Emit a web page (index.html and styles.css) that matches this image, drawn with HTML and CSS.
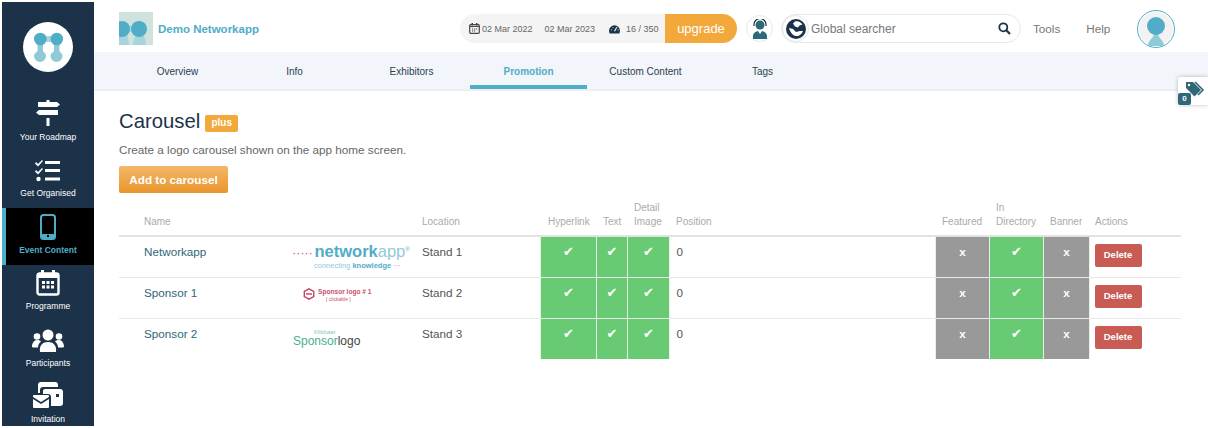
FILE: index.html
```html
<!doctype html>
<html lang="en">
  <head>
    <meta charset="UTF-8" />
    <title>Carousel</title>
    <link rel="stylesheet" href="styles.css">
  </head>
  <body>
    <div class="app">
      <nav class="sidebar">
        <div class="brand">
          <svg width="50" height="50" viewBox="0 0 50 50">
            <circle cx="25" cy="25" r="25" fill="#fff" />
            <path d="M17 14h17v6H17z" fill="#a9d6df" />
            <path d="M14.500 20h5.500v9c0 1 3 2 3 5a6 6 0 0 1-12 0c0-3 3.500-4 3.500-5zM31 20h5.500v9c0 1 3 2 3 5a6 6 0 0 1-12 0c0-3 3.500-4 3.500-5z" fill="#8fcbd6" />
            <circle cx="17.300" cy="17" r="6.300" fill="#4fadc7" />
            <circle cx="33.800" cy="17" r="6.300" fill="#4fadc7" />
          </svg>
        </div>
        <a class="nav-item">
          <svg width="26" height="28" viewBox="0 0 26 28" fill="#fff">
            <path d="M3 3h19l3 2.500L22 8H3zM1 13.500L4 11h19v5H4zM11.500 1h3v2h-3zM11.500 19h3v8h-3z" />
          </svg>
          <span>Your Roadmap</span>
        </a>
        <a class="nav-item">
          <svg width="26" height="24" viewBox="0 0 26 24" fill="#fff">
            <path d="M1 3l2 2 4-4 1 1-5 5.500L0 4.500zM1 11l2 2 4-4 1 1-5 5.500L0 12.500z" />
            <circle cx="3.500" cy="20" r="2.200" />
            <path d="M10 2h15v3H10zM10 10h15v3H10zM10 18.500h15v3H10z" />
          </svg>
          <span>Get Organised</span>
        </a>
        <a class="nav-item active">
          <svg width="16" height="26" viewBox="0 0 16 26">
            <rect x="1" y="1" width="14" height="24" rx="2.500" fill="none" stroke="#4fadc7" stroke-width="2" />
            <path d="M1 20h14v3a2 2 0 0 1-2 2H3a2 2 0 0 1-2-2z" fill="#4fadc7" />
            <circle cx="8" cy="22" r="1.200" fill="#000" />
          </svg>
          <span>Event Content</span>
        </a>
        <a class="nav-item">
          <svg width="24" height="26" viewBox="0 0 24 26">
            <rect x="1.500" y="3.500" width="21" height="21" rx="2" fill="none" stroke="#fff" stroke-width="2.400" />
            <path d="M1 3h22v5H1zM5 0h3v4H5zM16 0h3v4h-3z" fill="#fff" />
            <path d="M6 11h3v3H6zM10.500 11h3v3h-3zM15 11h3v3h-3zM6 15.500h3v3H6zM10.500 15.500h3v3h-3zM15 15.500h3v3h-3z" fill="#fff" />
          </svg>
          <span>Programme</span>
        </a>
        <a class="nav-item">
          <svg width="32" height="24" viewBox="0 0 32 24" fill="#fff">
            <circle cx="16" cy="6" r="5.500" />
            <circle cx="5" cy="7.500" r="3.300" />
            <circle cx="27" cy="7.500" r="3.300" />
            <path d="M8 23c-1-7 3-10 8-10s9 3 8 10zM0 18c0-4 2-7 5-7 2 0 3 .5 4 1.500-2 1.500-3 3.500-3 6H1zM32 18c0-4-2-7-5-7-2 0-3 .5-4 1.500 2 1.500 3 3.500 3 6h5z" />
          </svg>
          <span>Participants</span>
        </a>
        <a class="nav-item">
          <svg width="30" height="27" viewBox="0 0 30 27" fill="#fff">
            <path d="M5 3a3 3 0 0 1 3-3h14a3 3 0 0 1 3 3v2H10a3 3 0 0 0-3 3v3H5z" />
            <path d="M12 7h15a3 3 0 0 1 3 3v11a3 3 0 0 1-3 3h-9v-9a3 3 0 0 0-3-3h-5v-3a2 2 0 0 1 2-2z" />
            <path d="M0 15l8 5 8-5v-1a1 1 0 0 0-1-1H1a1 1 0 0 0-1 1zM0 17v8a1 1 0 0 0 1 1h14a1 1 0 0 0 1-1v-8l-8 5z" />
            <rect x="23" y="12" width="3" height="3" fill="#1c3249" />
          </svg>
          <span>Invitation</span>
        </a>
      </nav>

      <div class="page">
        <header class="topbar">
          <div class="event">
            <svg class="event-thumb" width="34" height="33" viewBox="0 0 34 33">
              <rect width="34" height="33" fill="#cfe3dc" />
              <path d="M10 14h8v6h-8z" fill="#a9d6df" />
              <path d="M0 33V20h6c2 3 4 6 4 13zM14 33c0-7 3-9 4-13h5c1 4 4 6 4 13z" fill="#a8d5dc" />
              <circle cx="3" cy="17" r="8" fill="#4fadc7" />
              <circle cx="20" cy="17" r="8" fill="#4fadc7" />
            </svg>
            <span class="event-name">Demo Networkapp</span>
          </div>
          <div class="status-pill">
            <div class="status-info">
              <svg width="11" height="11" viewBox="0 0 11 11">
                <rect x=".7" y="1.700" width="9.600" height="8.600" rx="1" fill="none" stroke="#444" stroke-width="1.200" />
                <path d="M2.500 0h1.500v2.500H2.500zM7 0h1.500v2.500H7zM1 3h9v1H1zM3 5.500h1.200v1H3zM5 5.500h1.200v1H5zM7 5.500h1.200v1H7zM3 7.500h1.200v1H3zM5 7.500h1.200v1H5z" fill="#444" />
              </svg>
              <span class="date-from">02 Mar 2022</span>
              <span class="date-to">02 Mar 2023</span>
              <svg width="11" height="10" viewBox="0 0 12 10">
                <path d="M0 7a6 6 0 0 1 12 0c0 1-.3 2-.8 3H.8C.3 9 0 8 0 7z" fill="#1c3249" />
                <path d="M6 7.500L8.500 3" stroke="#f4f4f4" stroke-width="1.200" />
                <path d="M2 6h1M9.500 6h1M4 3.500h.8" stroke="#f4f4f4" />
              </svg>
              <span>16 / 350</span>
            </div>
            <a class="upgrade">upgrade</a>
          </div>
          <div class="round-btn">
            <svg width="16" height="20" viewBox="0 0 16 20">
              <circle cx="8" cy="6" r="4.500" fill="#2f6878" />
              <path d="M2 7V5.500a6 6 0 0 1 12 0V7" fill="none" stroke="#1c3249" stroke-width="1.200" />
              <path d="M1 20v-3c0-3 3-4.500 5-5l2 3 2-3c2 .5 5 2 5 5v3z" fill="#2f6878" />
            </svg>
          </div>
          <div class="search">
            <div class="globe">
              <svg width="20" height="20" viewBox="0 0 20 20">
                <circle cx="10" cy="10" r="10" fill="#1c3249" />
                <path d="M9 2.500c3-1 6 .5 7.500 3l-3 1-1.500 2-3-1-2-3zM3 9l4 1 3 3 4-1 3 0c-1 3-4 5.500-7 5-3 0-6-4-7-8z" fill="#fff" />
              </svg>
            </div>
            <span class="search-text">Global searcher</span>
            <svg width="13" height="13" viewBox="0 0 13 13">
              <circle cx="5.300" cy="5.300" r="4" fill="none" stroke="#1c3249" stroke-width="1.800" />
              <path d="M8.300 8.300l3.700 3.700" stroke="#1c3249" stroke-width="2.200" />
            </svg>
          </div>
          <a class="top-link tools">Tools</a>
          <a class="top-link help">Help</a>
          <div class="avatar">
            <svg width="34" height="34" viewBox="0 0 34 34">
              <circle cx="17" cy="17" r="17" fill="#f2f2f2" />
              <path d="M9 34c0-6 5-7 6-12h4c1 5 6 6 6 12z" fill="#8fcbd6" />
              <circle cx="17" cy="14" r="9" fill="#4fadc7" />
            </svg>
          </div>
        </header>

        <div class="tabs">
          <a class="tab">Overview</a>
          <a class="tab">Info</a>
          <a class="tab">Exhibitors</a>
          <a class="tab current">Promotion</a>
          <a class="tab">Custom Content</a>
          <a class="tab">Tags</a>
        </div>

        <main class="content">
          <div class="title-row">
            <h1>Carousel</h1>
            <span class="plus">plus</span>
          </div>
          <p class="intro">Create a logo carousel shown on the app home screen.</p>
          <a class="add-btn">Add to carousel</a>

          <table class="logos">
            <colgroup>
              <col class="c-name" />
              <col class="c-logo" />
              <col class="c-loc" />
              <col class="c-link" />
              <col class="c-text" />
              <col class="c-img" />
              <col class="c-pos" />
              <col class="c-feat" />
              <col class="c-dir" />
              <col class="c-ban" />
              <col class="c-act" />
            </colgroup>
            <thead>
              <tr>
                <th class="name">Name</th>
                <th></th>
                <th class="loc">Location</th>
                <th class="link">Hyperlink</th>
                <th>Text</th>
                <th>Detail<br />Image</th>
                <th>Position</th>
                <th>Featured</th>
                <th>In<br />Directory</th>
                <th>Banner</th>
                <th class="actions">Actions</th>
              </tr>
            </thead>
            <tbody>
              <tr>
                <td class="name">Networkapp</td>
                <td class="logo-cell">
                  <div class="logo-net">
                    <div class="net-main"><i>·····</i><b>network</b><em>app</em><sup>®</sup></div>
                    <div class="net-sub">connecting <b>knowledge</b> <i>···</i></div>
                  </div>
                </td>
                <td class="loc">Stand 1</td>
                <td class="yes">✔</td>
                <td class="yes">✔</td>
                <td class="yes">✔</td>
                <td>0</td>
                <td class="no">x</td>
                <td class="yes">✔</td>
                <td class="no">x</td>
                <td class="act"><a class="del">Delete</a></td>
              </tr>
              <tr>
                <td class="name">Sponsor 1</td>
                <td class="logo-cell">
                  <div class="logo-one">
                    <svg width="12" height="12" viewBox="0 0 12 12">
                      <path d="M6 .8l4.700 2.700v5L6 11.200 1.300 8.500v-5z" fill="none" stroke="#c0455f" stroke-width="1.400" />
                      <path d="M3 6h6" stroke="#c0455f" stroke-width="1.400" />
                    </svg>
                    <div>
                      <div class="one-main">Sponsor logo # 1</div>
                      <div class="one-sub">[ clickable ]</div>
                    </div>
                  </div>
                </td>
                <td class="loc">Stand 2</td>
                <td class="yes">✔</td>
                <td class="yes">✔</td>
                <td class="yes">✔</td>
                <td>0</td>
                <td class="no">x</td>
                <td class="yes">✔</td>
                <td class="no">x</td>
                <td class="act"><a class="del">Delete</a></td>
              </tr>
              <tr>
                <td class="name">Sponsor 2</td>
                <td class="logo-cell">
                  <div class="logo-two">
                    <div class="two-sub">Klikbaar</div>
                    <div class="two-main"><b>Sponsor</b>logo</div>
                  </div>
                </td>
                <td class="loc">Stand 3</td>
                <td class="yes">✔</td>
                <td class="yes">✔</td>
                <td class="yes">✔</td>
                <td>0</td>
                <td class="no">x</td>
                <td class="yes">✔</td>
                <td class="no">x</td>
                <td class="act"><a class="del">Delete</a></td>
              </tr>
            </tbody>
          </table>
        </main>
      </div>
    </div>

    <div class="tag-widget">
      <svg width="20" height="17" viewBox="0 0 20 17">
        <path d="M1 1h7l8 8-6.500 6.500L1 7z" fill="#2f6878" />
        <circle cx="4" cy="4" r="1.200" fill="#fff" />
        <path d="M10 1l8 8-5 5" fill="none" stroke="#2f6878" stroke-width="1.600" />
      </svg>
      <span class="tag-count">0</span>
    </div>
  </body>
</html>
```

FILE: styles.css
```css
html,
body {
  margin: 0;
  height: 428px;
  overflow: hidden;
  background: #fff;
}
body {
  font-family: "Liberation Sans", Arial, sans-serif;
  color: #555;
}
.app {
  display: flex;
  height: 424px;
  padding: 2px 0 2px 2px;
}
.sidebar {
  width: 92px;
  flex: none;
  background: #1c3249;
  overflow: hidden;
}
.brand {
  height: 93px;
  display: flex;
  justify-content: center;
  padding-top: 20px;
  box-sizing: border-box;
}
.nav-item {
  display: flex;
  flex-direction: column;
  align-items: center;
  justify-content: flex-end;
  gap: 5px;
  height: 56.5px;
  padding-bottom: 10px;
  box-sizing: border-box;
  font-size: 8.500px;
  color: #fff;
}
.nav-item.active {
  background: #000;
  color: #4fadc7;
  font-weight: bold;
  border-left: 4px solid #4fadc7;
  padding-right: 4px;
}
.page {
  flex: 1;
  min-width: 0;
}
.topbar {
  display: flex;
  align-items: center;
  height: 50px;
  padding: 3px 0 0 25px;
  box-sizing: border-box;
}
.event {
  display: flex;
  align-items: center;
  width: 341px;
}
.event-thumb {
  margin-right: 5px;
}
.event-name {
  font-size: 11.500px;
  font-weight: bold;
  color: #4fadc7;
}
.status-pill {
  display: flex;
  width: 277px;
  height: 29px;
  border-radius: 15px;
  background: #f4f4f4;
  overflow: hidden;
  font-size: 9px;
  color: #666;
}
.status-info {
  display: flex;
  align-items: center;
  width: 205px;
  padding-left: 9px;
  box-sizing: border-box;
}
.date-from {
  margin-left: 2px;
}
.date-to {
  margin-left: 12px;
  margin-right: 14px;
}
.status-info span:last-child {
  margin-left: 6px;
}
.upgrade {
  flex: 1;
  display: flex;
  align-items: center;
  justify-content: center;
  background: #f2a83b;
  color: #fff;
  font-size: 13px;
}
.round-btn {
  width: 25px;
  height: 25px;
  margin-left: 9px;
  border: 1px solid #e8e8e8;
  border-radius: 50%;
  display: flex;
  align-items: center;
  justify-content: center;
}
.search {
  display: flex;
  align-items: center;
  width: 240px;
  height: 29px;
  margin-left: 8px;
  border: 1px solid #e8e8e8;
  border-radius: 15px;
  box-sizing: border-box;
  padding-right: 9px;
}
.globe {
  width: 27px;
  height: 27px;
  border: 1px solid #e8e8e8;
  border-radius: 50%;
  box-sizing: border-box;
  display: flex;
  align-items: center;
  justify-content: center;
  flex: none;
}
.search-text {
  flex: 1;
  margin-left: 2px;
  font-size: 12px;
  color: #777;
}
.top-link {
  font-size: 11.700px;
  color: #777;
}
.tools {
  margin-left: 12px;
}
.help {
  margin-left: 26px;
}
.avatar {
  width: 38px;
  height: 38px;
  margin-left: 27px;
  border: 1.500px solid #4fadc7;
  border-radius: 50%;
  box-sizing: border-box;
  display: flex;
  align-items: center;
  justify-content: center;
  overflow: hidden;
}
.tabs {
  display: flex;
  height: 39px;
  padding-left: 25px;
  background: #f2f5f9;
  border-bottom: 2px solid #ebeef2;
  box-sizing: border-box;
}
.tab {
  width: 117px;
  box-sizing: border-box;
  text-align: center;
  font-size: 10px;
  line-height: 39px;
  color: #2c3e50;
}
.tab.current {
  font-weight: bold;
  color: #4fadc7;
  height: 37px;
  border-bottom: 4px solid #4fadc7;
}
.content {
  padding: 18px 27px 0 25px;
}
.title-row {
  display: flex;
  align-items: center;
  gap: 5px;
  height: 24px;
}
h1 {
  margin: 0;
  font-size: 20.300px;
  font-weight: normal;
  color: #1c3249;
}
.plus {
  margin-top: 4px;
  width: 33px;
  height: 17px;
  line-height: 16px;
  text-align: center;
  background: #f2a83b;
  border-radius: 2px;
  font-size: 10px;
  font-weight: bold;
  color: #fff;
}
.intro {
  margin: 10px 0 0;
  font-size: 11.700px;
  line-height: 14px;
  color: #666;
}
.add-btn {
  display: block;
  width: 109px;
  height: 27px;
  margin-top: 9px;
  line-height: 27px;
  text-align: center;
  border-radius: 2px;
  background: linear-gradient(#f4b768, #e8962c);
  font-size: 11.700px;
  font-weight: bold;
  color: #fff;
}
.logos {
  width: 1062px;
  margin-top: 8px;
  table-layout: fixed;
  border-collapse: collapse;
}
.c-name { width: 165px; }
.c-logo { width: 132px; }
.c-loc { width: 124px; }
.c-link { width: 56px; }
.c-text { width: 31px; }
.c-img { width: 42px; }
.c-pos { width: 266px; }
.c-feat { width: 54px; }
.c-dir { width: 54px; }
.c-ban { width: 46px; }
.c-act { width: 92px; }
.logos th {
  padding: 0 0 6px 7px;
  border-bottom: 2px solid #e2e2e2;
  vertical-align: bottom;
  text-align: left;
  font-size: 10px;
  font-weight: normal;
  line-height: 14px;
  color: #aaa;
  white-space: nowrap;
}
.logos td {
  height: 41px;
  padding: 8px 0 0 7px;
  box-sizing: border-box;
  border-top: 1px solid #e8e8e8;
  vertical-align: top;
  font-size: 11.700px;
  line-height: 14px;
}
.logos tbody tr:first-child td {
  border-top: 0;
}
.logos .name {
  padding-left: 25px;
}
.logos .loc {
  padding-left: 6px;
}
.logos .link {
  padding-left: 8px;
}
.logos .actions {
  padding-left: 6px;
}
.logos td.name {
  color: #2f6878;
}
.logos td.yes,
.logos td.no {
  padding: 8px 0 0 1px;
  text-align: center;
  color: #fff;
  border-left: 1px solid #e6f0e6;
  border-right: 1px solid #e6f0e6;
}
.logos td.yes {
  background: #68cb73;
  font-family: "DejaVu Sans", sans-serif;
  font-size: 13px;
}
.logos td.no {
  background: #999;
  font-weight: bold;
}
.logos td.logo-cell {
  padding: 8px 0 0 9px;
  overflow: hidden;
}
.logos td.act {
  padding: 7px 0 0 5px;
}
.del {
  display: block;
  width: 47px;
  height: 23px;
  line-height: 22px;
  text-align: center;
  background: #c85c55;
  border-radius: 2px;
  font-size: 9.500px;
  font-weight: bold;
  color: #fff;
}
.logo-net {
  width: 118px;
  margin-top: -1px;
}
.net-main {
  font-size: 16.500px;
  line-height: 15px;
  font-weight: bold;
  white-space: nowrap;
}
.net-main i {
  font-style: normal;
  color: #e0529c;
  font-size: 9px;
  letter-spacing: 1.100px;
  margin-right: 1px;
}
.net-main b {
  color: #4fadc7;
}
.net-main em {
  font-style: normal;
  font-weight: normal;
  color: #8fcbd6;
}
.net-main sup {
  font-size: 6px;
  color: #4fadc7;
  font-weight: normal;
  line-height: 0;
}
.net-sub {
  margin: 0 0 0 21px;
  font-size: 7.500px;
  line-height: 8px;
  color: #8fcbd6;
  white-space: nowrap;
}
.net-sub b {
  color: #4fadc7;
}
.net-sub i {
  font-style: normal;
  color: #e0529c;
}
.logo-one {
  display: flex;
  align-items: flex-start;
  gap: 3px;
  margin: 2px 0 0 10px;
}
.one-main {
  font-size: 6.600px;
  line-height: 8px;
  font-weight: bold;
  color: #c9506a;
  white-space: nowrap;
}
.one-sub {
  margin-left: 8px;
  font-size: 5px;
  line-height: 6px;
  color: #c9506a;
}
.logo-two {
  white-space: nowrap;
}
.two-sub {
  margin: 2px 0 0 21px;
  font-size: 6px;
  line-height: 6px;
  color: #8cc9ab;
}
.two-main {
  font-size: 12px;
  line-height: 13px;
  color: #444;
}
.two-main b {
  font-weight: normal;
  color: #4caf8e;
}
.tag-widget {
  position: absolute;
  top: 77px;
  left: 1178px;
  width: 30px;
  height: 28px;
  background: #fff;
  border-radius: 3px 0 0 3px;
  box-shadow: 0 0 4px rgba(0, 0, 0, .25);
}
.tag-widget svg {
  position: absolute;
  top: 4px;
  left: 7px;
}
.tag-count {
  position: absolute;
  left: 0;
  bottom: 0;
  width: 13px;
  height: 12px;
  line-height: 12px;
  text-align: center;
  background: #2f6878;
  border-radius: 2px;
  font-size: 8px;
  font-weight: bold;
  color: #fff;
}
```
